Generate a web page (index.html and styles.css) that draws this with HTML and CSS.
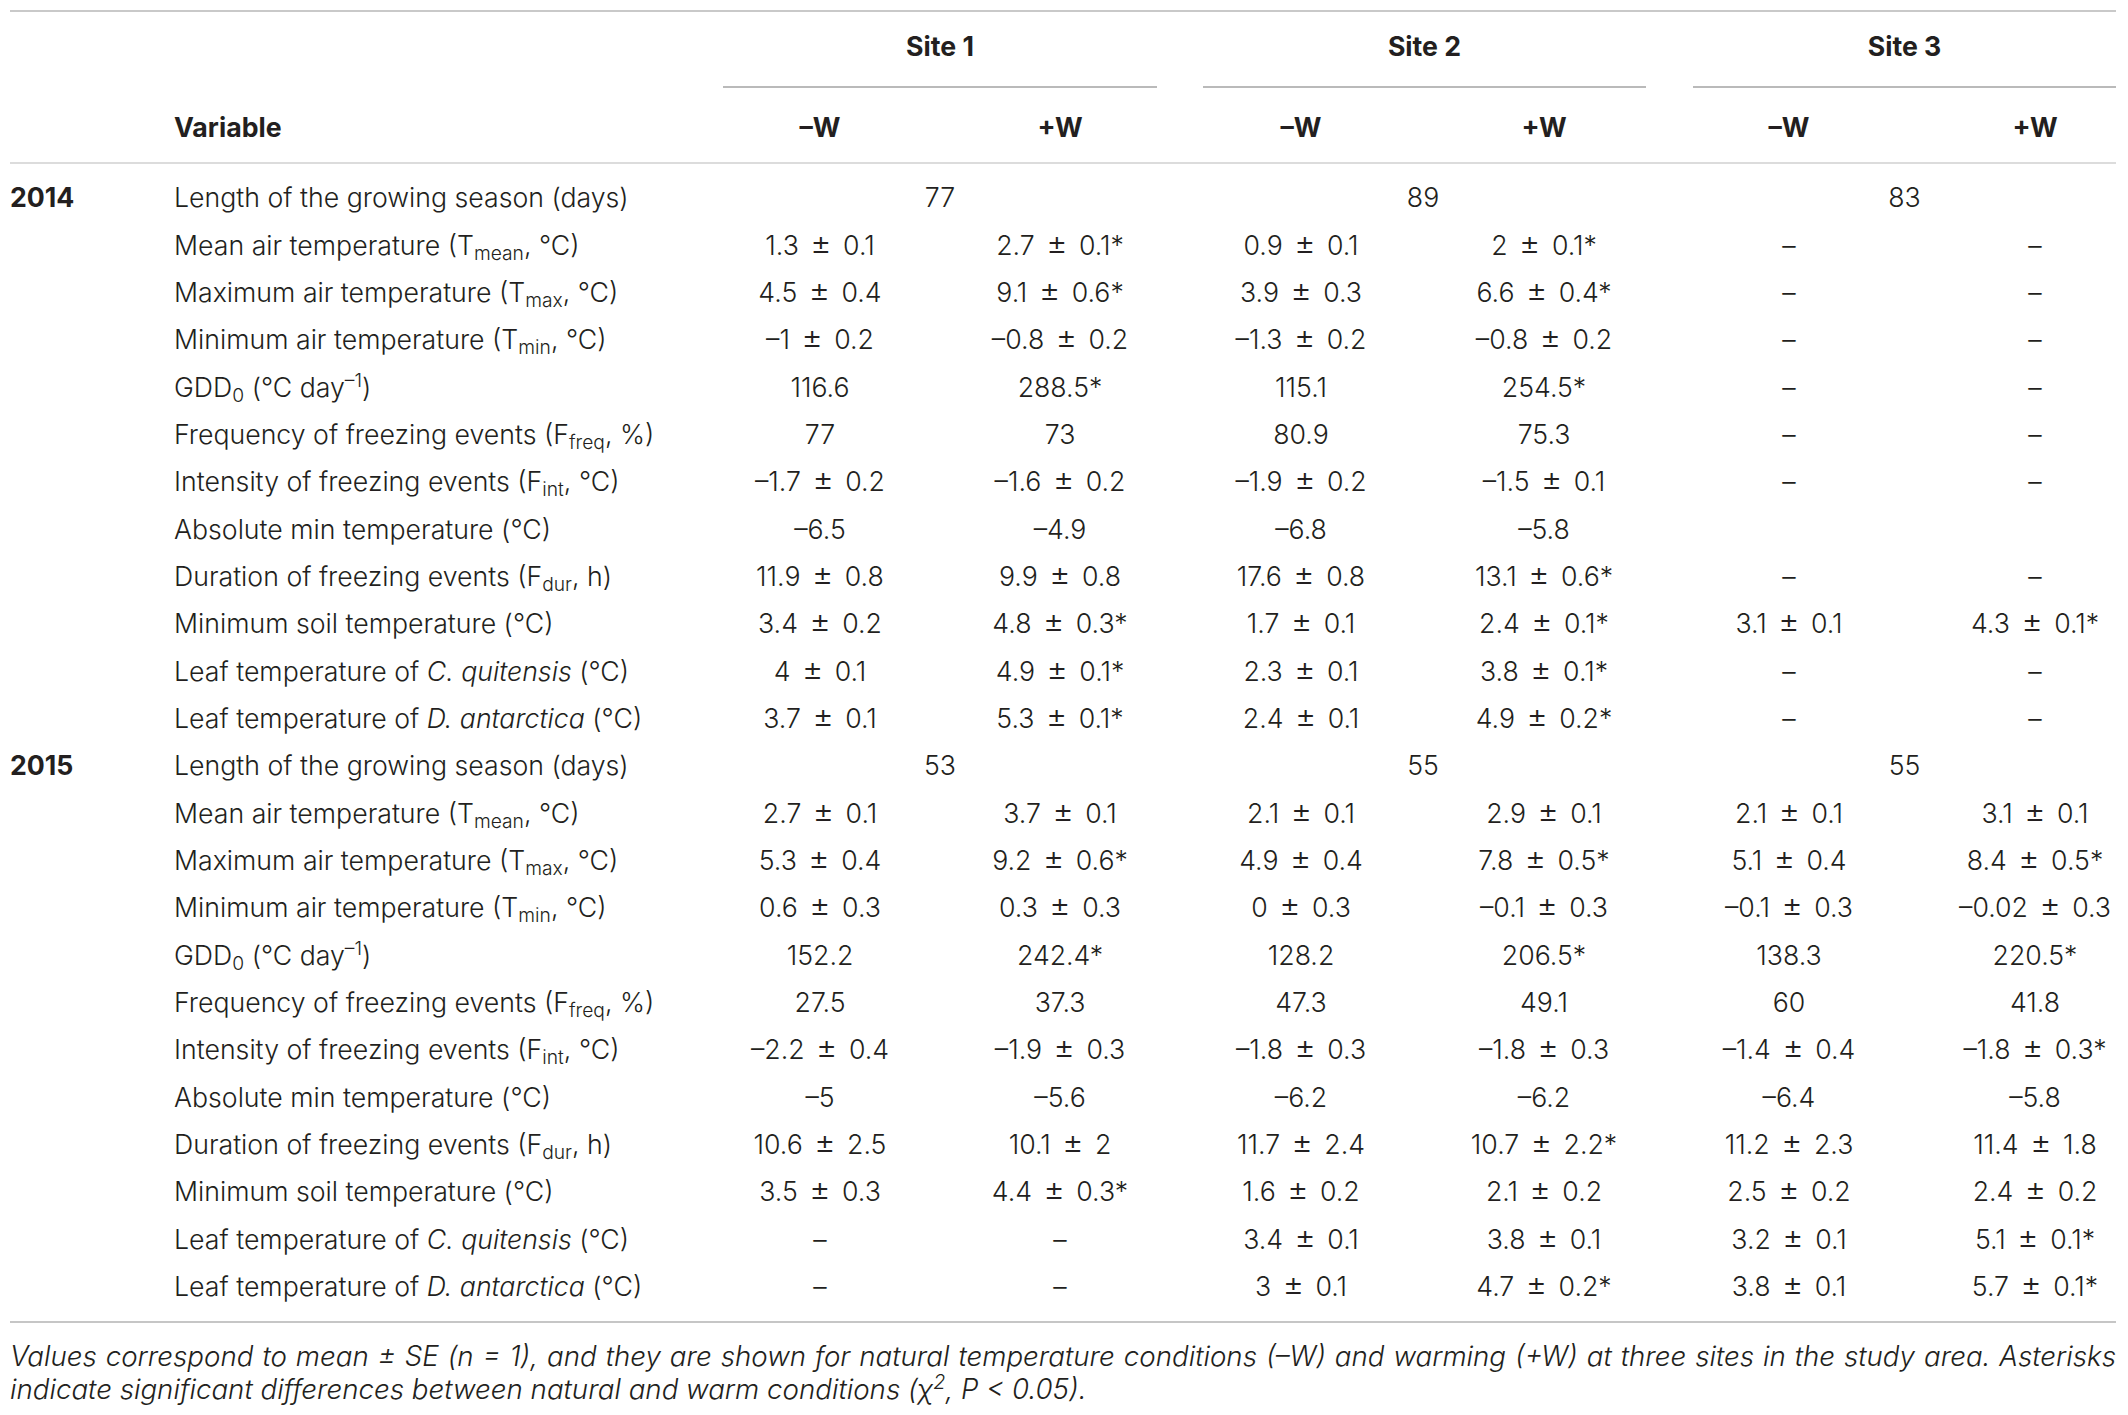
FILE: index.html
```html
<!DOCTYPE html>
<html lang="en">
<head>
<meta charset="utf-8">
<title>Table</title>
<link rel="stylesheet" href="styles.css">
</head>
<body>
<div class="wrap">
<table class="data">
<colgroup>
<col class="c-year"><col class="c-var"><col class="c-s1a"><col class="c-s1b"><col class="c-s2a"><col class="c-s2b"><col class="c-s3a"><col class="c-s3b">
</colgroup>
<thead>
<tr class="sites">
<th></th><th></th>
<th colspan="2" class="site s1"><div class="site-label">Site 1</div></th>
<th colspan="2" class="site s2"><div class="site-label">Site 2</div></th>
<th colspan="2" class="site s3"><div class="site-label">Site 3</div></th>
</tr>
<tr class="conds">
<th></th><th class="var">Variable</th>
<th>–W</th><th>+W</th><th>–W</th><th>+W</th><th>–W</th><th class="last">+W</th>
</tr>
</thead>
<tbody>
<tr class="first"><th class="year">2014</th><td class="var">Length of the growing season (days)</td><td colspan="2">77</td><td colspan="2">89</td><td colspan="2" class="span3">83</td></tr>
<tr><th></th><td class="var">Mean air temperature (T<sub>mean</sub>, °C)</td><td>1.3 <span class="pm">±</span> 0.1</td><td>2.7 <span class="pm">±</span> 0.1*</td><td>0.9 <span class="pm">±</span> 0.1</td><td>2 <span class="pm">±</span> 0.1*</td><td>–</td><td class="last">–</td></tr>
<tr><th></th><td class="var">Maximum air temperature (T<sub>max</sub>, °C)</td><td>4.5 <span class="pm">±</span> 0.4</td><td>9.1 <span class="pm">±</span> 0.6*</td><td>3.9 <span class="pm">±</span> 0.3</td><td>6.6 <span class="pm">±</span> 0.4*</td><td>–</td><td class="last">–</td></tr>
<tr><th></th><td class="var">Minimum air temperature (T<sub>min</sub>, °C)</td><td>–1 <span class="pm">±</span> 0.2</td><td>–0.8 <span class="pm">±</span> 0.2</td><td>–1.3 <span class="pm">±</span> 0.2</td><td>–0.8 <span class="pm">±</span> 0.2</td><td>–</td><td class="last">–</td></tr>
<tr><th></th><td class="var">GDD<sub>0</sub> (°C day<sup>–1</sup>)</td><td>116.6</td><td>288.5*</td><td>115.1</td><td>254.5*</td><td>–</td><td class="last">–</td></tr>
<tr><th></th><td class="var">Frequency of freezing events (F<sub>freq</sub>, %)</td><td>77</td><td>73</td><td>80.9</td><td>75.3</td><td>–</td><td class="last">–</td></tr>
<tr><th></th><td class="var">Intensity of freezing events (F<sub>int</sub>, °C)</td><td>–1.7 <span class="pm">±</span> 0.2</td><td>–1.6 <span class="pm">±</span> 0.2</td><td>–1.9 <span class="pm">±</span> 0.2</td><td>–1.5 <span class="pm">±</span> 0.1</td><td>–</td><td class="last">–</td></tr>
<tr><th></th><td class="var">Absolute min temperature (°C)</td><td>–6.5</td><td>–4.9</td><td>–6.8</td><td>–5.8</td><td></td><td class="last"></td></tr>
<tr><th></th><td class="var">Duration of freezing events (F<sub>dur</sub>, h)</td><td>11.9 <span class="pm">±</span> 0.8</td><td>9.9 <span class="pm">±</span> 0.8</td><td>17.6 <span class="pm">±</span> 0.8</td><td>13.1 <span class="pm">±</span> 0.6*</td><td>–</td><td class="last">–</td></tr>
<tr><th></th><td class="var">Minimum soil temperature (°C)</td><td>3.4 <span class="pm">±</span> 0.2</td><td>4.8 <span class="pm">±</span> 0.3*</td><td>1.7 <span class="pm">±</span> 0.1</td><td>2.4 <span class="pm">±</span> 0.1*</td><td>3.1 <span class="pm">±</span> 0.1</td><td class="last">4.3 <span class="pm">±</span> 0.1*</td></tr>
<tr><th></th><td class="var">Leaf temperature of <i>C. quitensis</i> (°C)</td><td>4 <span class="pm">±</span> 0.1</td><td>4.9 <span class="pm">±</span> 0.1*</td><td>2.3 <span class="pm">±</span> 0.1</td><td>3.8 <span class="pm">±</span> 0.1*</td><td>–</td><td class="last">–</td></tr>
<tr><th></th><td class="var">Leaf temperature of <i>D. antarctica</i> (°C)</td><td>3.7 <span class="pm">±</span> 0.1</td><td>5.3 <span class="pm">±</span> 0.1*</td><td>2.4 <span class="pm">±</span> 0.1</td><td>4.9 <span class="pm">±</span> 0.2*</td><td>–</td><td class="last">–</td></tr>

<tr><th class="year">2015</th><td class="var">Length of the growing season (days)</td><td colspan="2">53</td><td colspan="2">55</td><td colspan="2" class="span3">55</td></tr>
<tr><th></th><td class="var">Mean air temperature (T<sub>mean</sub>, °C)</td><td>2.7 <span class="pm">±</span> 0.1</td><td>3.7 <span class="pm">±</span> 0.1</td><td>2.1 <span class="pm">±</span> 0.1</td><td>2.9 <span class="pm">±</span> 0.1</td><td>2.1 <span class="pm">±</span> 0.1</td><td class="last">3.1 <span class="pm">±</span> 0.1</td></tr>
<tr><th></th><td class="var">Maximum air temperature (T<sub>max</sub>, °C)</td><td>5.3 <span class="pm">±</span> 0.4</td><td>9.2 <span class="pm">±</span> 0.6*</td><td>4.9 <span class="pm">±</span> 0.4</td><td>7.8 <span class="pm">±</span> 0.5*</td><td>5.1 <span class="pm">±</span> 0.4</td><td class="last">8.4 <span class="pm">±</span> 0.5*</td></tr>
<tr><th></th><td class="var">Minimum air temperature (T<sub>min</sub>, °C)</td><td>0.6 <span class="pm">±</span> 0.3</td><td>0.3 <span class="pm">±</span> 0.3</td><td>0 <span class="pm">±</span> 0.3</td><td>–0.1 <span class="pm">±</span> 0.3</td><td>–0.1 <span class="pm">±</span> 0.3</td><td class="last">–0.02 <span class="pm">±</span> 0.3</td></tr>
<tr><th></th><td class="var">GDD<sub>0</sub> (°C day<sup>–1</sup>)</td><td>152.2</td><td>242.4*</td><td>128.2</td><td>206.5*</td><td>138.3</td><td class="last">220.5*</td></tr>
<tr><th></th><td class="var">Frequency of freezing events (F<sub>freq</sub>, %)</td><td>27.5</td><td>37.3</td><td>47.3</td><td>49.1</td><td>60</td><td class="last">41.8</td></tr>
<tr><th></th><td class="var">Intensity of freezing events (F<sub>int</sub>, °C)</td><td>–2.2 <span class="pm">±</span> 0.4</td><td>–1.9 <span class="pm">±</span> 0.3</td><td>–1.8 <span class="pm">±</span> 0.3</td><td>–1.8 <span class="pm">±</span> 0.3</td><td>–1.4 <span class="pm">±</span> 0.4</td><td class="last">–1.8 <span class="pm">±</span> 0.3*</td></tr>
<tr><th></th><td class="var">Absolute min temperature (°C)</td><td>–5</td><td>–5.6</td><td>–6.2</td><td>–6.2</td><td>–6.4</td><td class="last">–5.8</td></tr>
<tr><th></th><td class="var">Duration of freezing events (F<sub>dur</sub>, h)</td><td>10.6 <span class="pm">±</span> 2.5</td><td>10.1 <span class="pm">±</span> 2</td><td>11.7 <span class="pm">±</span> 2.4</td><td>10.7 <span class="pm">±</span> 2.2*</td><td>11.2 <span class="pm">±</span> 2.3</td><td class="last">11.4 <span class="pm">±</span> 1.8</td></tr>
<tr><th></th><td class="var">Minimum soil temperature (°C)</td><td>3.5 <span class="pm">±</span> 0.3</td><td>4.4 <span class="pm">±</span> 0.3*</td><td>1.6 <span class="pm">±</span> 0.2</td><td>2.1 <span class="pm">±</span> 0.2</td><td>2.5 <span class="pm">±</span> 0.2</td><td class="last">2.4 <span class="pm">±</span> 0.2</td></tr>
<tr><th></th><td class="var">Leaf temperature of <i>C. quitensis</i> (°C)</td><td>–</td><td>–</td><td>3.4 <span class="pm">±</span> 0.1</td><td>3.8 <span class="pm">±</span> 0.1</td><td>3.2 <span class="pm">±</span> 0.1</td><td class="last">5.1 <span class="pm">±</span> 0.1*</td></tr>
<tr class="final"><th></th><td class="var">Leaf temperature of <i>D. antarctica</i> (°C)</td><td>–</td><td>–</td><td>3 <span class="pm">±</span> 0.1</td><td>4.7 <span class="pm">±</span> 0.2*</td><td>3.8 <span class="pm">±</span> 0.1</td><td class="last">5.7 <span class="pm">±</span> 0.1*</td></tr>
</tbody>
</table>
<p class="caption"><span class="line1">Values correspond to mean ± SE (n = 1), and they are shown for natural temperature conditions (–W) and warming (+W) at three sites in the study area. Asterisks</span> indicate significant differences between natural and warm conditions (χ<sup>2</sup>, P &lt; 0.05).</p>
</div>
</body>
</html>
```
FILE: styles.css
```css
html, body {
  margin: 0;
  background: #ffffff;
}

body {
  padding: 10px 12px 0 10px;
  font-family: Inter, "Liberation Sans", sans-serif;
  font-weight: 300;
  font-size: 26.7px;
  color: #231f20;
}

.wrap {
  width: 2106px;
}

.data {
  width: 2106px;
  table-layout: fixed;
  border-collapse: separate;
  border-spacing: 0;
  border-top: 2px solid #c9c9c9;
  border-bottom: 2px solid #c6c6c6;
}

.c-year { width: 164px; }
.c-var { width: 526px; }
.c-s1a { width: 240px; }
.c-s1b { width: 240px; }
.c-s2a { width: 242px; }
.c-s2b { width: 244px; }
.c-s3a { width: 246px; }
.c-s3b { width: 204px; }

th, td {
  padding: 0;
  font-weight: 300;
  text-align: center;
  white-space: nowrap;
}

thead th {
  font-weight: 700;
  line-height: 34px;
}

.sites th {
  padding-top: 17px;
  vertical-align: top;
}

.sites .site {
  padding-left: 23px;
  padding-right: 23px;
}

.sites .s2 {
  padding-right: 20px;
}

.sites .s3 {
  padding-left: 27px;
  padding-right: 0;
}

.site-label {
  padding-bottom: 23px;
  border-bottom: 2px solid #bababa;
}

.conds th {
  padding-top: 22px;
  padding-bottom: 18px;
  border-bottom: 2px solid #dcdcdc;
}

.conds th.var {
  text-align: left;
}

.conds th.last,
tbody td.last {
  padding-left: 42px;
}

tbody th,
tbody td {
  line-height: 47.33px;
  height: 47.33px;
  vertical-align: middle;
}

tbody td {
  word-spacing: 4px;
}

tbody td.var {
  text-align: left;
  word-spacing: 0;
}

.pm {
  font-size: 1.22em;
  line-height: 0;
}

tbody td.span3 {
  padding-left: 27px;
}

tbody th.year {
  text-align: left;
  font-weight: 700;
}

tbody tr.first th,
tbody tr.first td {
  padding-top: 10.3px;
}

tbody tr.final th,
tbody tr.final td {
  padding-bottom: 10.8px;
}

sub, sup {
  font-size: 0.72em;
  line-height: 0;
}

sub {
  vertical-align: -0.28em;
}

sup {
  vertical-align: 0.5em;
}

i {
  font-style: italic;
}

.caption {
  margin: 0;
  padding-top: 17.5px;
  font-size: 27.7px;
  font-style: italic;
  line-height: 33px;
}

.caption .line1 {
  display: block;
  text-align: justify;
  text-align-last: justify;
}
```
